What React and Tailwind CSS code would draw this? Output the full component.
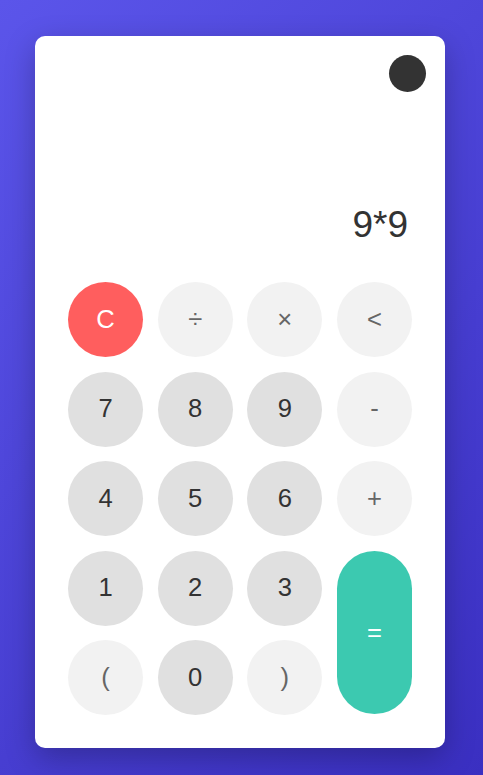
import React from "react";

const btnBase =
  "flex items-center justify-center rounded-full w-[75px] h-[75px] text-[25.6px] leading-none";

export default function App() {
  const digit = `${btnBase} bg-[#e0e0e0] text-[#333333]`;
  const op = `${btnBase} bg-[#f2f2f2] text-[#666666]`;
  return (
    <div
      className="w-[483px] h-[775px] bg-[linear-gradient(135deg,#5b55ea_0%,#3a2fc1_100%)] pt-[36px] px-[35px]"
      style={{ fontFamily: "Arial, 'Liberation Sans', sans-serif" }}
    >
      <div className="relative w-[410px] h-[712px] bg-white rounded-[10px] shadow-[0_10px_30px_rgba(0,0,0,0.25)] px-[33px]">
        <div className="absolute top-[19px] right-[19px] w-[37px] h-[37px] rounded-full bg-[#333333]" />
        <div className="h-[246px] flex items-end justify-end pb-[39px] pr-[4px]">
          <span className="text-[37px] leading-none text-[#333333]">9*9</span>
        </div>
        <div className="grid grid-cols-[repeat(4,75px)] grid-rows-[repeat(5,75px)] justify-between gap-y-[14.5px]">
          <button className={`${btnBase} bg-[#ff5e5e] text-white`}>C</button>
          <button className={op}>÷</button>
          <button className={op}>×</button>
          <button className={op}>&lt;</button>
          <button className={digit}>7</button>
          <button className={digit}>8</button>
          <button className={digit}>9</button>
          <button className={op}>-</button>
          <button className={digit}>4</button>
          <button className={digit}>5</button>
          <button className={digit}>6</button>
          <button className={op}>+</button>
          <button className={digit}>1</button>
          <button className={digit}>2</button>
          <button className={digit}>3</button>
          <button className="row-span-2 flex items-center justify-center rounded-full w-[75px] h-[163px] self-center bg-[#3cc9b0] text-white text-[25.6px] leading-none">
            =
          </button>
          <button className={op}>(</button>
          <button className={digit}>0</button>
          <button className={op}>)</button>
        </div>
      </div>
    </div>
  );
}
